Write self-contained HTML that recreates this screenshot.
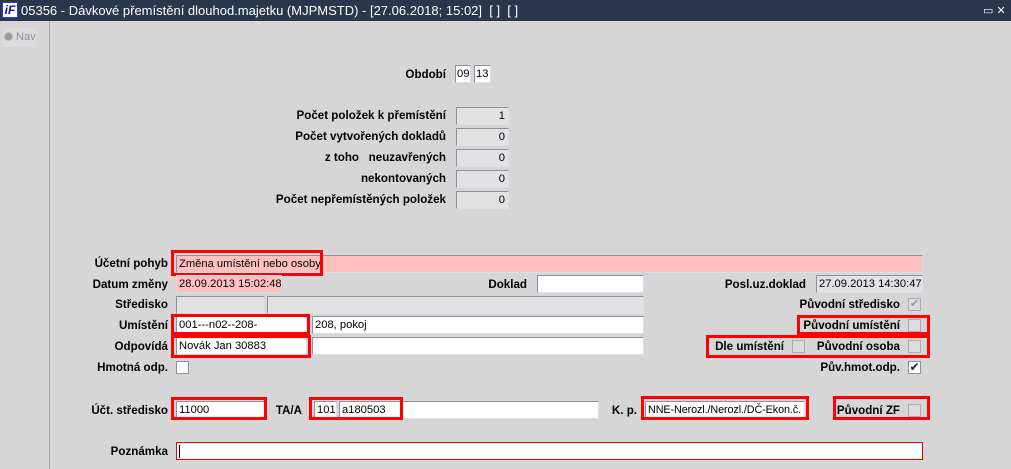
<!DOCTYPE html><html><head><meta charset="utf-8"><style>
*{margin:0;padding:0;box-sizing:border-box}
body{width:1011px;height:469px;background:#d6d6d6;position:relative;overflow:hidden;font-family:"Liberation Sans",Arial,sans-serif;font-size:12px;color:#000}
.a{position:absolute}
.l{position:absolute;font-weight:bold;text-align:right;white-space:nowrap;line-height:14px;font-size:11.6px}
.f{position:absolute;background:#fff;border:1px solid #8a93a4;border-right-color:#dde;border-bottom-color:#dde;height:18px;line-height:16px;padding-left:2px;white-space:nowrap;overflow:hidden;font-size:11.2px}
.g{background:#e2e2e2}
.p{background:#ffc0c0}
.r{position:absolute;border:3px solid #f00}
.cb{position:absolute;width:13px;height:13px;border:1px solid #8a93a4;background:#fff}
.cbg{background:#dcdcdc;border-color:#aab}
.n{text-align:right;padding-right:3px}
</style></head><body>
<div class="a" style="left:0;top:0;width:1011px;height:21px;background:#2a364b"></div>
<div class="a" style="left:2px;top:2px;width:16px;height:16px;background:#fff;border:1px solid #33f;color:#11a;font:italic bold 12px 'Liberation Sans';line-height:14px;text-align:center">iF</div>
<div class="a" style="left:21px;top:3px;color:#fff;font-size:13px;line-height:15px">05356 - Dávkové přemístění dlouhod.majetku (MJPMSTD) - [27.06.2018; 15:02] &nbsp;[ ] &nbsp;[ ]</div>
<div class="a" style="left:983px;top:4px;color:#fff;font-size:11px">▭ ✕</div>
<div class="a" style="left:49px;top:21px;width:1px;height:448px;background:#a0a8b4"></div>
<div class="a" style="left:3px;top:28px;width:33px;height:19px;background:#dcdcdc;color:#8890a0;font-size:11px;line-height:19px;padding-left:1px"><span style="display:inline-block;width:9px;height:9px;border-radius:50%;background:#999;border:1px solid #bbb;vertical-align:-1px"></span> Nav</div>

<div class="l" style="right:565px;top:68px">Období</div>
<div class="f" style="left:455px;top:65px;width:16px;padding-left:1px">09</div>
<div class="f" style="left:474px;top:65px;width:17px;padding-left:1px">13</div>

<div class="l" style="right:565px;top:109px">Počet položek k přemístění</div>
<div class="l" style="right:565px;top:130px">Počet vytvořených dokladů</div>
<div class="l" style="right:565px;top:151px">z toho &nbsp;&nbsp;neuzavřených</div>
<div class="l" style="right:565px;top:172px">nekontovaných</div>
<div class="l" style="right:565px;top:193px">Počet nepřemístěných položek</div>
<div class="f g n" style="left:456px;top:107px;width:53px">1</div>
<div class="f g n" style="left:456px;top:128px;width:53px">0</div>
<div class="f g n" style="left:456px;top:149px;width:53px">0</div>
<div class="f g n" style="left:456px;top:170px;width:53px">0</div>
<div class="f g n" style="left:456px;top:191px;width:53px">0</div>

<div class="l" style="right:843px;top:257px">Účetní pohyb</div>
<div class="f p" style="left:176px;top:255px;width:747px">Změna umístění nebo osoby</div>
<div class="r" style="left:171px;top:250px;width:152px;height:26px"></div>

<div class="l" style="right:843px;top:278px">Datum změny</div>
<div class="f p" style="left:176px;top:275px;width:106px;border-color:#ddd">28.09.2013 15:02:48</div>
<div class="l" style="right:484px;top:278px">Doklad</div>
<div class="f" style="left:537px;top:275px;width:107px"></div>
<div class="l" style="right:205px;top:278px">Posl.uz.doklad</div>
<div class="f g" style="left:816px;top:275px;width:107px">27.09.2013 14:30:47</div>

<div class="l" style="right:843px;top:298px">Středisko</div>
<div class="f g" style="left:176px;top:296px;width:89px"></div>
<div class="f g" style="left:267px;top:296px;width:377px"></div>
<div class="l" style="right:111px;top:298px">Původní středisko</div>
<div class="cb cbg" style="left:908px;top:298px;color:#99a;font-size:11px;line-height:11px;text-align:center">✔</div>

<div class="l" style="right:843px;top:319px">Umístění</div>
<div class="f" style="left:176px;top:316px;width:131px">001---n02--208-</div>
<div class="f" style="left:312px;top:316px;width:332px">208, pokoj</div>
<div class="r" style="left:171px;top:314px;width:139px;height:21px"></div>
<div class="l" style="right:111px;top:319px">Původní umístění</div>
<div class="cb cbg" style="left:908px;top:319px"></div>
<div class="r" style="left:797px;top:315px;width:133px;height:20px"></div>

<div class="l" style="right:843px;top:340px">Odpovídá</div>
<div class="f" style="left:176px;top:337px;width:131px">Novák Jan 30883</div>
<div class="f" style="left:312px;top:337px;width:332px"></div>
<div class="r" style="left:171px;top:335px;width:140px;height:23px"></div>
<div class="l" style="right:227px;top:340px">Dle umístění</div>
<div class="cb cbg" style="left:792px;top:340px"></div>
<div class="l" style="right:111px;top:340px">Původní osoba</div>
<div class="cb cbg" style="left:908px;top:340px"></div>
<div class="r" style="left:706px;top:335px;width:224px;height:23px"></div>

<div class="l" style="right:843px;top:361px">Hmotná odp.</div>
<div class="cb" style="left:176px;top:361px"></div>
<div class="l" style="right:111px;top:361px">Pův.hmot.odp.</div>
<div class="cb" style="left:908px;top:361px;font-size:12px;line-height:11px;text-align:center;color:#223">✔</div>

<div class="l" style="right:843px;top:404px">Účt. středisko</div>
<div class="f" style="left:176px;top:401px;width:89px">11000</div>
<div class="r" style="left:171px;top:397px;width:96px;height:23px"></div>
<div class="l" style="right:709px;top:404px">TA/A</div>
<div class="f" style="left:314px;top:401px;width:23px">101</div>
<div class="f" style="left:339px;top:401px;width:260px">a180503</div>
<div class="r" style="left:309px;top:397px;width:94px;height:23px"></div>
<div class="l" style="right:374px;top:404px">K. p.</div>
<div class="f" style="left:645px;top:401px;width:160px;font-size:10.8px;letter-spacing:-0.1px">NNE-Nerozl./Nerozl./DČ-Ekon.č.</div>
<div class="r" style="left:641px;top:396px;width:168px;height:24px"></div>
<div class="l" style="right:111px;top:404px">Původní ZF</div>
<div class="cb cbg" style="left:908px;top:404px"></div>
<div class="r" style="left:833px;top:396px;width:97px;height:24px"></div>

<div class="l" style="right:843px;top:445px">Poznámka</div>
<div class="f" style="left:176px;top:442px;width:747px;border:1px solid #f00"><span style="display:inline-block;width:1px;height:13px;background:#000;margin-top:2px"></span></div>
</body></html>
